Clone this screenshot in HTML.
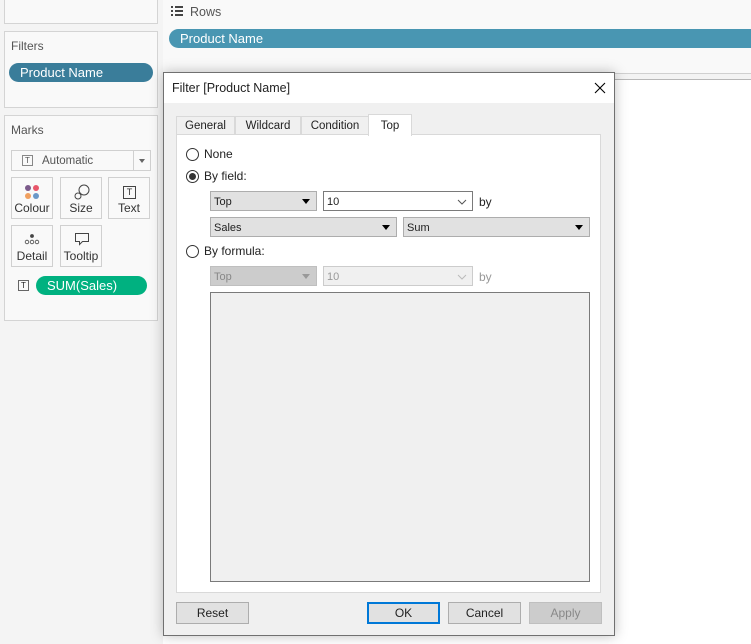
<!DOCTYPE html><html><head><style>
*{box-sizing:border-box;margin:0;padding:0}
body{width:751px;height:644px;position:relative;overflow:hidden;background:#fff;font-family:"Liberation Sans",Arial,sans-serif;font-size:12px;color:#222}
.a{position:absolute}
.card{position:absolute;background:#f9f9f9;border:1px solid #d4d4d4}
.pill{position:absolute;border-radius:10px;color:#fff;font-size:13px;line-height:19px;padding-left:11px}
.mb{position:absolute;width:42px;height:42px;border:1px solid #d0d0d0;background:#f9f9f9;text-align:center;font-size:12px;color:#333}
.mb span{position:absolute;bottom:3px;left:0;right:0}
.tab{position:absolute;top:116px;height:19px;background:#f0f0f0;border:1px solid #d9d9d9;border-bottom:none;font-size:11.5px;text-align:center;line-height:19px}
.sel{position:absolute;height:20px;background:#e1e1e1;border:1px solid #adadad;font-size:11px;line-height:16px;padding:2px 0 0 3px}
.tri{position:absolute;right:6px;top:7px;width:0;height:0;border-left:4px solid transparent;border-right:4px solid transparent;border-top:5px solid #000}
.radio{position:absolute;width:13px;height:13px;border:1px solid #333;border-radius:50%;background:#fff}
.lbl{position:absolute;font-size:12px}
.btn{position:absolute;top:602px;width:73px;height:22px;background:#e1e1e1;border:1px solid #adadad;text-align:center;line-height:20px;font-size:12px}
</style></head><body>
<div class="a" style="left:0;top:0;width:163px;height:644px;background:#f4f4f4"></div>
<div class="card" style="left:4px;top:-1px;width:154px;height:25px"></div>
<div class="card" style="left:4px;top:31px;width:154px;height:77px"></div>
<div class="a" style="left:11px;top:39px;font-size:12px;color:#555">Filters</div>
<div class="pill" style="left:9px;top:63px;width:144px;background:#3a7d9a">Product Name</div>
<div class="card" style="left:4px;top:115px;width:154px;height:206px"></div>
<div class="a" style="left:11px;top:123px;font-size:12px;color:#555">Marks</div>
<div class="a" style="left:11px;top:150px;width:140px;height:21px;border:1px solid #d0d0d0;background:#f9f9f9;font-size:11.5px;color:#555;line-height:17px;padding:2px 0 0 30px">Automatic<div class="a" style="left:10px;top:4px;width:11px;height:11px;border:1px solid #888;font-size:8px;line-height:9px;text-align:center">T</div><div class="a" style="left:121px;top:0;width:1px;height:19px;background:#d0d0d0"></div><div class="a" style="left:127px;top:8px;border-left:3px solid transparent;border-right:3px solid transparent;border-top:4px solid #666"></div></div>
<div class="mb" style="left:11px;top:177px"><svg class="a" style="left:12px;top:6px" width="16" height="16"><circle cx="4" cy="4" r="3" fill="#7b5a8a"/><circle cx="12" cy="4" r="3" fill="#e8566a"/><circle cx="4" cy="12" r="3" fill="#f0a060"/><circle cx="12" cy="12" r="3" fill="#6a98c8"/></svg><span>Colour</span></div>
<div class="mb" style="left:60px;top:177px"><svg class="a" style="left:13px;top:6px" width="16" height="16" fill="none" stroke="#444"><circle cx="10" cy="6" r="5"/><circle cx="4" cy="12" r="3"/></svg><span>Size</span></div>
<div class="mb" style="left:108px;top:177px"><div class="a" style="left:14px;top:8px;width:13px;height:13px;border:1px solid #444;font-size:9px;line-height:11px">T</div><span>Text</span></div>
<div class="mb" style="left:11px;top:225px"><svg class="a" style="left:12px;top:7px" width="16" height="12" fill="none" stroke="#444" stroke-width=".8"><circle cx="8" cy="3" r="1.5" fill="#444"/><circle cx="3" cy="9" r="1.8"/><circle cx="8" cy="9" r="1.8"/><circle cx="13" cy="9" r="1.8"/></svg><span>Detail</span></div>
<div class="mb" style="left:60px;top:225px"><svg class="a" style="left:13px;top:6px" width="16" height="15" fill="none" stroke="#444"><path d="M1.5 1.5h13v8h-6l-3 3v-3h-4z"/></svg><span>Tooltip</span></div>
<div class="a" style="left:18px;top:280px;width:11px;height:11px;border:1px solid #666;font-size:8px;line-height:9px;text-align:center">T</div>
<div class="pill" style="left:36px;top:276px;width:111px;background:#00b180">SUM(Sales)</div>
<div class="a" style="left:163px;top:0;width:588px;height:73px;background:#f9f9f9"></div>
<div class="a" style="left:163px;top:73px;width:588px;height:7px;background:#f3f3f3;border-top:1px solid #d0d0d0;border-bottom:1px solid #b8b8b8"></div>
<svg class="a" style="left:171px;top:6px" width="12" height="10" fill="#444"><rect x="0" y="0" width="2" height="2"/><rect x="4" y="0" width="8" height="2"/><rect x="0" y="4" width="2" height="2"/><rect x="4" y="4" width="8" height="2"/><rect x="0" y="8" width="2" height="2"/><rect x="4" y="8" width="8" height="2"/></svg>
<div class="a" style="left:190px;top:5px;font-size:12.5px;color:#555">Rows</div>
<div class="pill" style="left:169px;top:29px;width:600px;background:#4996b2">Product Name</div>
<div class="a" style="left:163px;top:72px;width:452px;height:564px;background:#f0f0f0;border:1px solid #707070;box-shadow:0 0 12px rgba(0,0,0,.25)">
<div class="a" style="left:0;top:0;width:450px;height:30px;background:#fff"></div>
<div class="a" style="left:8px;top:8px;font-size:12.5px">Filter [Product Name]</div>
<svg class="a" style="left:430px;top:9px" width="12" height="12" stroke="#000" stroke-width="1.1"><path d="M1 1L11 11M11 1L1 11"/></svg>
</div>
<div class="tab" style="left:176px;width:59px">General</div>
<div class="tab" style="left:235px;width:66px">Wildcard</div>
<div class="tab" style="left:301px;width:68px">Condition</div>
<div class="a" style="left:176px;top:134px;width:425px;height:459px;background:#fff;border:1px solid #d9d9d9"></div>
<div class="tab" style="left:368px;top:114px;width:44px;height:22px;background:#fff;line-height:22px">Top</div>
<div class="radio" style="left:186px;top:148px"></div><div class="lbl" style="left:204px;top:147px">None</div>
<div class="radio" style="left:186px;top:170px"><div class="a" style="left:2px;top:2px;width:7px;height:7px;border-radius:50%;background:#333"></div></div><div class="lbl" style="left:204px;top:169px">By field:</div>
<div class="sel" style="left:210px;top:191px;width:107px">Top<div class="tri"></div></div>
<div class="sel" style="left:323px;top:191px;width:150px;background:#fff;border-color:#7a7a7a">10<svg class="a" style="left:133px;top:7px" width="10" height="6" fill="none" stroke="#555"><path d="M1 1l4 4 4-4"/></svg></div>
<div class="lbl" style="left:479px;top:195px">by</div>
<div class="sel" style="left:210px;top:217px;width:187px">Sales<div class="tri"></div></div>
<div class="sel" style="left:403px;top:217px;width:187px">Sum<div class="tri"></div></div>
<div class="radio" style="left:186px;top:245px"></div><div class="lbl" style="left:204px;top:244px">By formula:</div>
<div class="sel" style="left:210px;top:266px;width:107px;background:#ccc;border-color:#bfbfbf;color:#888">Top<div class="tri" style="border-top-color:#999"></div></div>
<div class="sel" style="left:323px;top:266px;width:150px;background:#f0f0f0;border-color:#ccc;color:#999">10<svg class="a" style="left:133px;top:7px" width="10" height="6" fill="none" stroke="#bbb"><path d="M1 1l4 4 4-4"/></svg></div>
<div class="lbl" style="left:479px;top:270px;color:#999">by</div>
<div class="a" style="left:210px;top:292px;width:380px;height:290px;background:#f0f0f0;border:1px solid #7a7a7a"></div>
<div class="btn" style="left:176px">Reset</div>
<div class="btn" style="left:367px;border:2px solid #0078d7;line-height:18px">OK</div>
<div class="btn" style="left:448px">Cancel</div>
<div class="btn" style="left:529px;background:#ccc;border-color:#bfbfbf;color:#888">Apply</div>
</body></html>
